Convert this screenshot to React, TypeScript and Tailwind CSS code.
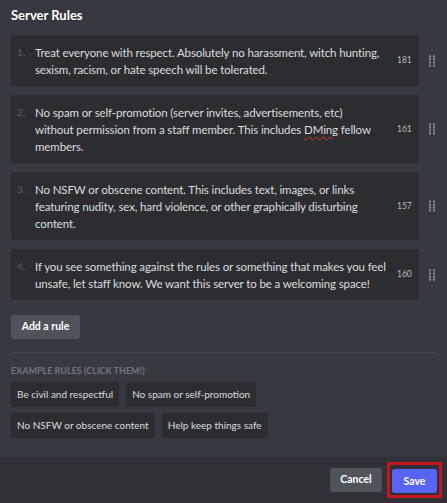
const rules = [
  {
    lines: [
      "Treat everyone with respect. Absolutely no harassment, witch hunting,",
      "sexism, racism, or hate speech will be tolerated.",
    ],
    count: 181,
  },
  {
    lines: [
      "No spam or self-promotion (server invites, advertisements, etc)",
      "without permission from a staff member. This includes DMing fellow",
      "members.",
    ],
    count: 161,
  },
  {
    lines: [
      "No NSFW or obscene content. This includes text, images, or links",
      "featuring nudity, sex, hard violence, or other graphically disturbing",
      "content.",
    ],
    count: 157,
  },
  {
    lines: [
      "If you see something against the rules or something that makes you feel",
      "unsafe, let staff know. We want this server to be a welcoming space!",
    ],
    count: 160,
  },
];

const examples = [
  ["Be civil and respectful", "No spam or self-promotion"],
  ["No NSFW or obscene content", "Help keep things safe"],
];

const DragHandle = () => (
  <svg width="6" height="12" viewBox="0 0 6 12" className="shrink-0">
    {[0, 1, 2, 3].map((r) =>
      [0, 1].map((c) => (
        <rect key={`${r}-${c}`} x={c * 4} y={r * 3 + 0.5} width="2" height="2" fill="#8e9297" />
      ))
    )}
  </svg>
);

// red squiggle under the misspelled word, like the spellchecker shows
const renderLine = (text: string) => {
  const i = text.indexOf("DMing");
  if (i < 0) return text;
  return (
    <>
      {text.slice(0, i)}
      <span className="underline decoration-wavy decoration-[#d83c3e] decoration-1 underline-offset-2">DMing</span>
      {text.slice(i + 5)}
    </>
  );
};

export default function App() {
  return (
    <div
      className="w-[447px] h-[503px] bg-[#36393f] flex flex-col overflow-hidden"
      style={{ fontFamily: 'Lato, "Noto Sans", sans-serif' }}
    >
      <div className="flex-1 px-[11px] pt-[6px]">
        <h2 className="text-[13px] font-bold text-white leading-[18px]">Server Rules</h2>

        <div className="mt-[11px] flex flex-col gap-[9px]">
          {rules.map((rule, i) => (
            <div key={i} className="flex items-center">
              <div className="w-[408px] bg-[#2b2d31] rounded-[3px] flex items-center pl-[6px] pr-[8px] py-[8.5px]">
                <span className="w-[18px] shrink-0 self-start text-[10px] leading-[17px] text-[#5c5f66]">{i + 1}.</span>
                <div className="flex-1 text-[11.5px] leading-[17px] tracking-[-0.12px] text-[#dcddde]">
                  {rule.lines.map((line, j) => (
                    <div key={j} className="whitespace-nowrap">
                      {renderLine(line)}
                    </div>
                  ))}
                </div>
                <span className="ml-[6px] w-[14px] text-right text-[8.5px] text-[#b9bbbe]">{rule.count}</span>
              </div>
              <div className="ml-[10px]">
                <DragHandle />
              </div>
            </div>
          ))}
        </div>

        <button className="mt-[15px] h-[24px] w-[69px] rounded-[3px] bg-[#4f545c] text-white text-[10.5px] font-bold">
          Add a rule
        </button>

        <div className="mt-[13px] h-px bg-[#40444b] w-[425px]" />

        <div className="mt-[12px] text-[9px] font-bold uppercase text-[#72767d] leading-[12px]">
          Example Rules (click them!)
        </div>

        <div className="mt-[5px] flex flex-col gap-[6px]">
          {examples.map((row, r) => (
            <div key={r} className="flex gap-[7px]">
              {row.map((label) => (
                <div
                  key={label}
                  className="h-[25px] px-[6px] flex items-center rounded-[3px] bg-[#2b2d31] text-[10px] text-[#dcddde]"
                >
                  {label}
                </div>
              ))}
            </div>
          ))}
        </div>
      </div>

      <div className="h-[46px] bg-[#2f3136] flex items-center justify-end pr-[10px] gap-[8px]">
        <button className="h-[24px] w-[52px] rounded-[3px] bg-[#4f545c] text-white text-[10.5px] font-bold">
          Cancel
        </button>
        <div className="border-[3px] border-[#c4161c] p-[2px] -ml-[3px] -mr-[5px]">
          <button className="h-[24px] w-[45px] rounded-[3px] bg-[#5865f2] text-white text-[10.5px] font-bold">
            Save
          </button>
        </div>
      </div>
    </div>
  );
}
